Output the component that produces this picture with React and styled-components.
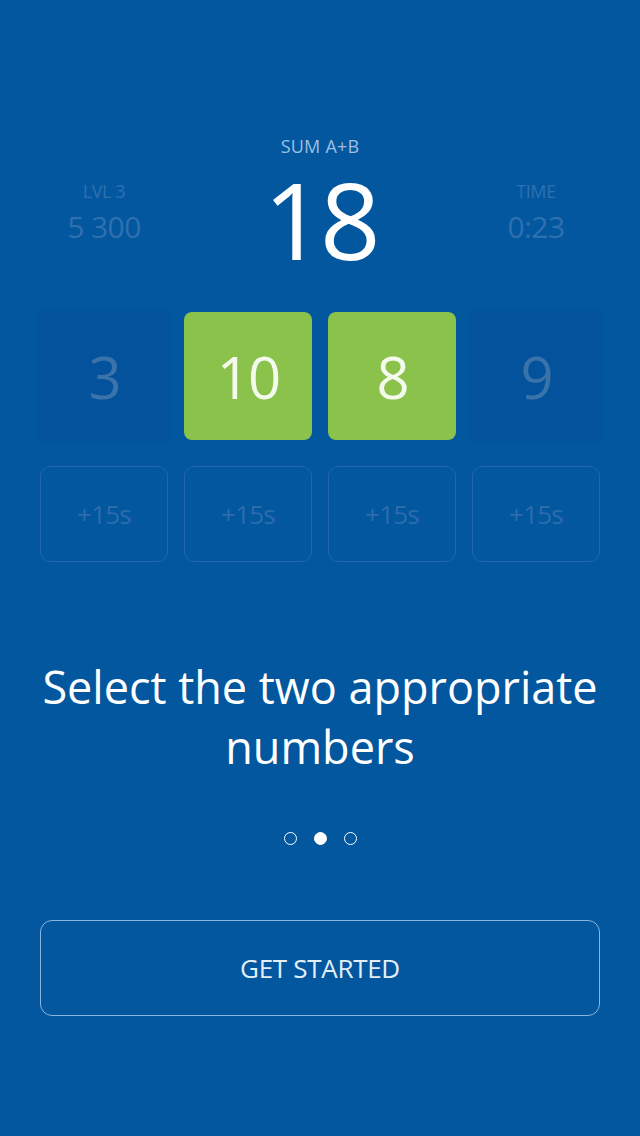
import React from "react";
import styled, { createGlobalStyle } from "styled-components";

const GlobalStyle = createGlobalStyle`
  html, body {
    margin: 0;
    padding: 0;
    background: #02579f;
  }
  body {
    font-family: "Open Sans", "Liberation Sans", sans-serif;
  }
`;

const Screen = styled.div`
  width: 640px;
  height: 1136px;
  box-sizing: border-box;
  padding: 136px 40px 0;
  background: #02579f;
  color: #fff;
  display: flex;
  flex-direction: column;
`;

const Board = styled.div`
  display: grid;
  grid-template-columns: repeat(4, 128px);
  column-gap: 16px;
`;

const Stat = styled.div`
  display: flex;
  flex-direction: column;
  align-items: center;
  padding-top: 44px;
  color: #2f70af;
`;

const StatLabel = styled.div`
  font-size: 18px;
  line-height: 22px;
  letter-spacing: -0.4px;
`;

const StatValue = styled.div`
  font-size: 30px;
  line-height: 36px;
  margin-top: 7px;
  letter-spacing: -0.6px;
`;

const Target = styled.div`
  grid-column: 2 / span 2;
  display: flex;
  flex-direction: column;
  align-items: center;
`;

const TargetLabel = styled.div`
  font-size: 18px;
  line-height: 20px;
  color: #9dbfe0;
  letter-spacing: 0.2px;
`;

const TargetValue = styled.div`
  font-size: 106px;
  line-height: 126px;
  letter-spacing: -4px;
`;

const Tiles = styled(Board)`
  margin-top: 30px;
`;

const Tile = styled.div`
  height: 128px;
  border-radius: 8px;
  display: flex;
  align-items: center;
  justify-content: center;
  font-size: 58px;
  letter-spacing: -2px;
  background: ${(p) => (p.$picked ? "#8bc24b" : "#03529b")};
  color: ${(p) => (p.$picked ? "#f4faee" : "#3a72aa")};
  box-shadow: ${(p) => (p.$picked ? "none" : "0 0 4px 0 #03539c")};
`;

const Bonuses = styled(Board)`
  margin-top: 26px;
`;

const Bonus = styled.div`
  height: 96px;
  box-sizing: border-box;
  border: 1px solid #2466a9;
  border-radius: 10px;
  display: flex;
  align-items: center;
  justify-content: center;
  font-size: 26px;
  color: #2d6cab;
  letter-spacing: -0.8px;
`;

const Title = styled.h1`
  margin: 95px 0 0;
  font-weight: 400;
  font-size: 45px;
  line-height: 60px;
  text-align: center;
  letter-spacing: 0;
`;

const Dots = styled.div`
  display: flex;
  justify-content: center;
  gap: 17px;
  margin-top: 55px;
`;

const Dot = styled.span`
  width: 13px;
  height: 13px;
  box-sizing: border-box;
  border-radius: 50%;
  border: 1.5px solid #fff;
  background: ${(p) => (p.$active ? "#fff" : "transparent")};
`;

const StartButton = styled.button`
  margin-top: 75px;
  height: 96px;
  width: 100%;
  box-sizing: border-box;
  border: 1.5px solid #8ab6e0;
  border-radius: 12px;
  background: transparent;
  color: #e4eef8;
  font-family: inherit;
  font-size: 26px;
  letter-spacing: -0.3px;
`;

const tiles = [
  { value: 3 },
  { value: 10, picked: true },
  { value: 8, picked: true },
  { value: 9 },
];

export default function App() {
  return (
    <>
      <GlobalStyle />
      <Screen>
        <Board>
          <Stat>
            <StatLabel>LVL 3</StatLabel>
            <StatValue>5 300</StatValue>
          </Stat>
          <Target>
            <TargetLabel>SUM A+B</TargetLabel>
            <TargetValue>18</TargetValue>
          </Target>
          <Stat>
            <StatLabel>TIME</StatLabel>
            <StatValue>0:23</StatValue>
          </Stat>
        </Board>

        <Tiles>
          {tiles.map((t, i) => (
            <Tile key={i} $picked={t.picked}>
              {t.value}
            </Tile>
          ))}
        </Tiles>

        <Bonuses>
          {tiles.map((_, i) => (
            <Bonus key={i}>+15s</Bonus>
          ))}
        </Bonuses>

        <Title>
          Select the two appropriate
          <br />
          numbers
        </Title>

        <Dots>
          <Dot />
          <Dot $active />
          <Dot />
        </Dots>

        <StartButton>GET STARTED</StartButton>
      </Screen>
    </>
  );
}
